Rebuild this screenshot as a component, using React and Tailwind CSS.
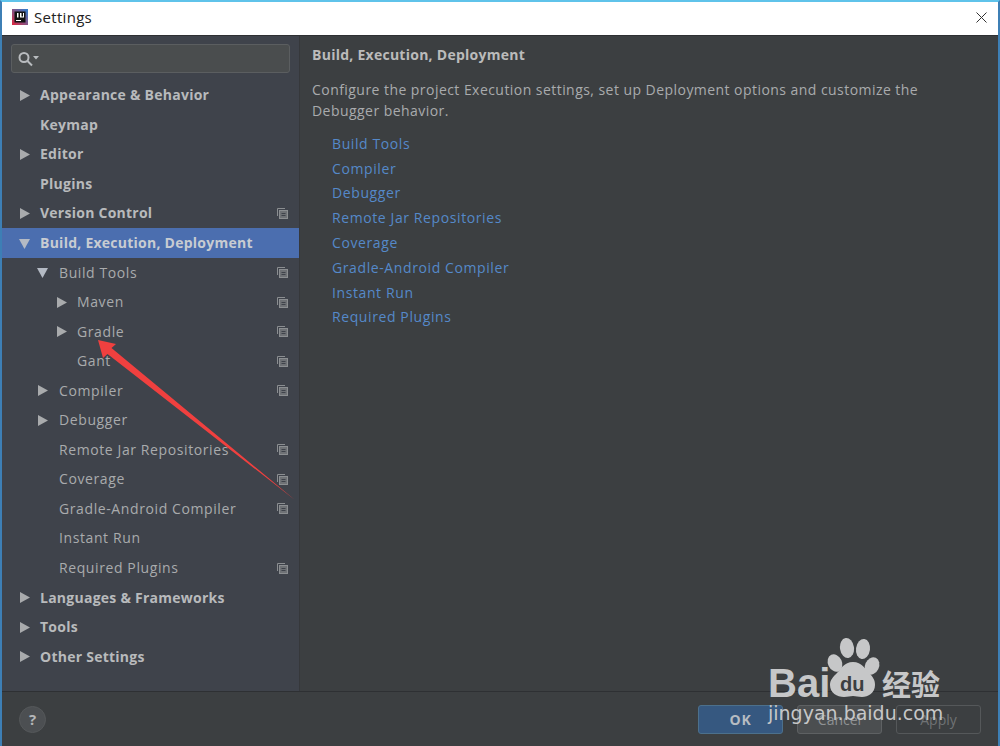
import React from "react";

const rows = [
  { t: "Appearance & Behavior", l: 0, a: "r", b: 1 },
  { t: "Keymap", l: 0, b: 1 },
  { t: "Editor", l: 0, a: "r", b: 1 },
  { t: "Plugins", l: 0, b: 1 },
  { t: "Version Control", l: 0, a: "r", b: 1, c: 1 },
  { t: "Build, Execution, Deployment", l: 0, a: "d", b: 1, s: 1 },
  { t: "Build Tools", l: 1, a: "d", c: 1 },
  { t: "Maven", l: 2, a: "r", c: 1 },
  { t: "Gradle", l: 2, a: "r", c: 1 },
  { t: "Gant", l: 2, c: 1 },
  { t: "Compiler", l: 1, a: "r", c: 1 },
  { t: "Debugger", l: 1, a: "r" },
  { t: "Remote Jar Repositories", l: 1, c: 1 },
  { t: "Coverage", l: 1, c: 1 },
  { t: "Gradle-Android Compiler", l: 1, c: 1 },
  { t: "Instant Run", l: 1 },
  { t: "Required Plugins", l: 1, c: 1 },
  { t: "Languages & Frameworks", l: 0, a: "r", b: 1 },
  { t: "Tools", l: 0, a: "r", b: 1 },
  { t: "Other Settings", l: 0, a: "r", b: 1 },
];
const links = ["Build Tools", "Compiler", "Debugger", "Remote Jar Repositories", "Coverage", "Gradle-Android Compiler", "Instant Run", "Required Plugins"];

function Tri({ dir }) {
  return (
    <svg width="11" height="11" viewBox="0 0 11 11" className="shrink-0">
      {dir === "r" ? <path d="M1 0 L11 5.5 L1 11Z" fill="#a9abad" /> : <path d="M0 1 H11 L5.5 11Z" fill="#b4bac4" />}
    </svg>
  );
}
function Copy() {
  return (
    <svg width="11" height="11" viewBox="0 0 11 11" className="shrink-0" fill="none" stroke="#8b8e91" strokeWidth="1">
      <path d="M.5 8V.5H8" />
      <rect x="2.5" y="2.5" width="8" height="8" fill="#6f7276" />
      <path d="M4.5 5.5h4M4.5 7.5h4" stroke="#3f434b" />
    </svg>
  );
}
const pad = ["pl-[17px]", "pl-[35px]", "pl-[54px]"];
const gap = ["w-[11px] mr-[10px]", "w-[11px] mr-[11px]", "w-[11px] mr-[10px]"];

export default function App() {
  return (
    <div className="relative w-[1000px] h-[746px] overflow-hidden flex flex-col bg-[#3c3f41] border-l-2 border-t-2 border-r-2 border-l-[#3d7fb5] border-r-[#3d7fb5] border-t-[#5fc3ea] font-['Open_Sans','Noto_Sans',sans-serif]">
      <div className="h-[33px] shrink-0 bg-white flex items-center pl-[10px] pr-[11px] pb-[3px]">
        <svg width="16" height="16" viewBox="0 0 16 16">
          <defs><linearGradient id="g" x1="0" y1="1" x2="1" y2="0"><stop offset="0" stopColor="#e0263c" /><stop offset="1" stopColor="#2a7fd0" /></linearGradient></defs>
          <rect width="16" height="16" fill="url(#g)" />
          <rect x="2.5" y="2.5" width="11" height="11" fill="#111" />
          <rect x="4" y="11" width="5" height="1" fill="#fff" />
          <path d="M5 4h1.500v4.500H5zM8 4h1.500v3.500H11V4h1v4.500H8z" fill="#fff" />
        </svg>
        <span className="ml-[6px] text-[15px] text-[#222] tracking-[0.3px]">Settings</span>
        <svg width="11" height="11" viewBox="0 0 11 11" className="ml-auto" stroke="#333" strokeWidth="1"><path d="M.5.500l10 10M10.500.500l-10 10" /></svg>
      </div>
      <div className="h-px bg-[#2e3033] shrink-0" />
      <div className="flex-1 flex min-h-0">
        <div className="w-[297px] shrink-0 bg-[#3f434b]">
          <div className="px-[9px] pt-[8px] pb-[7px]">
            <div className="h-[29px] rounded-[3px] border border-[#5b5e60] bg-[#4a4d4e] flex items-center pl-[6px]">
              <svg width="22" height="16" viewBox="0 0 22 16" fill="none" stroke="#b9bcbf" strokeWidth="2">
                <circle cx="6" cy="6.500" r="4.500" />
                <path d="M9.500 10l4.500 4.500" />
                <path d="M15 5h6l-3 3.500z" fill="#b9bcbf" stroke="none" />
              </svg>
            </div>
          </div>
          <div className="pt-[0.5px]">
            {rows.map((r) => (
              <div key={r.t} className={`h-[29.55px] flex items-center pr-[11px] ${pad[r.l]} ${r.s ? "bg-[#4b6eaf]" : ""}`}>
                <span className={gap[r.l] + " flex items-center"}>{r.a && <Tri dir={r.a} />}</span>
                <span className={`text-[14px] leading-none ${r.b ? "font-bold tracking-[0.25px]" : "tracking-[0.6px]"} ${r.s ? "text-[#c8ccd2]" : r.b ? "text-[#b8babc]" : "text-[#a9abad]"}`}>{r.t}</span>
                {r.c && <span className="ml-auto flex"><Copy /></span>}
              </div>
            ))}
          </div>
        </div>
        <div className="w-px bg-[#36383b] shrink-0" />
        <div className="flex-1 pl-[12px] pt-[9px]">
          <div className="text-[14px] leading-[20px] font-bold text-[#bbbbbb] tracking-[0.26px]">Build, Execution, Deployment</div>
          <p className="mt-[14px] text-[14px] leading-[21px] text-[#a9abad] tracking-[0.45px] w-[625px]">Configure the project Execution settings, set up Deployment options and customize the Debugger behavior.</p>
          <div className="mt-[10px] pl-[20px] flex flex-col">
            {links.map((l) => (
              <span key={l} className="h-[24.8px] flex items-center text-[14px] text-[#5589c9] tracking-[0.6px]">{l}</span>
            ))}
          </div>
        </div>
      </div>
      <div className="h-px bg-[#2e3033] shrink-0" />
      <div className="h-[54px] shrink-0 bg-[#3c3f41] flex items-start pl-[17px] pr-[17px] pt-[13px]">
        <div className="mt-[1px] w-[27px] h-[27px] rounded-full bg-[#4c4f52] border border-[#55585a] flex items-center justify-center text-[15px] font-bold text-[#b4b6b8]">?</div>
        <div className="ml-auto flex gap-[14px]">
          <div className="w-[85px] h-[29px] rounded-[3px] bg-[#365880] border border-[#4c708c] flex items-center justify-center text-[14px] font-bold text-[#b6bcc2] tracking-[0.8px]">OK</div>
          <div className="w-[85px] h-[29px] rounded-[3px] bg-[#4b4e50] border border-[#5e6163] flex items-center justify-center text-[14px] text-[#8f9294]">Cancel</div>
          <div className="w-[85px] h-[29px] rounded-[3px] border border-[#55585a] flex items-center justify-center text-[14px] text-[#6f7274]">Apply</div>
        </div>
      </div>

      <svg className="absolute left-[-2px] top-[-2px] pointer-events-none" width="1000" height="746" viewBox="0 0 1000 746">
        <path d="M98 340 L116 344 L111.500 348 L295 500 L107.500 354 L103 358Z" fill="#f0403f" />
      </svg>

      <div className="absolute left-[766px] top-[636px] w-[184px] h-[100px] text-[#c6c7c8] pointer-events-none">
        <svg className="absolute left-0 top-0" width="120" height="70" viewBox="0 0 120 70" fill="#c6c7c8">
          <ellipse cx="79" cy="10" rx="7" ry="10" transform="rotate(-8 79 10)" />
          <ellipse cx="95" cy="11" rx="7" ry="10" transform="rotate(8 95 11)" />
          <ellipse cx="67" cy="25" rx="7" ry="9" transform="rotate(-25 67 25)" />
          <ellipse cx="104" cy="28" rx="7" ry="9" transform="rotate(25 104 28)" />
          <path d="M85 24c9 0 12 7 16 11s6 7 6 12c0 8-7 12-13 12-4 0-6-1-9-1s-5 1-9 1c-7 0-14-4-14-12 0-5 3-8 7-12s7-11 16-11z" />
        </svg>
        <span className="absolute left-0 top-[22px] text-[40px] leading-[46px] font-bold font-['Liberation_Sans',sans-serif]">Bai</span>
        <span className="absolute left-[72px] top-[35px] text-[20px] leading-[22px] font-bold text-[#3c3f41] font-['Liberation_Sans',sans-serif]">du</span>
        <span className="absolute left-[114px] top-[27px] text-[29px] leading-[36px] font-bold font-['Noto_Sans_CJK_SC',sans-serif]">经验</span>
        <span className="absolute left-0 top-[62px] text-[19px] leading-[26px] font-['DejaVu_Sans',sans-serif]">jingyan.baidu.com</span>
      </div>
    </div>
  );
}
